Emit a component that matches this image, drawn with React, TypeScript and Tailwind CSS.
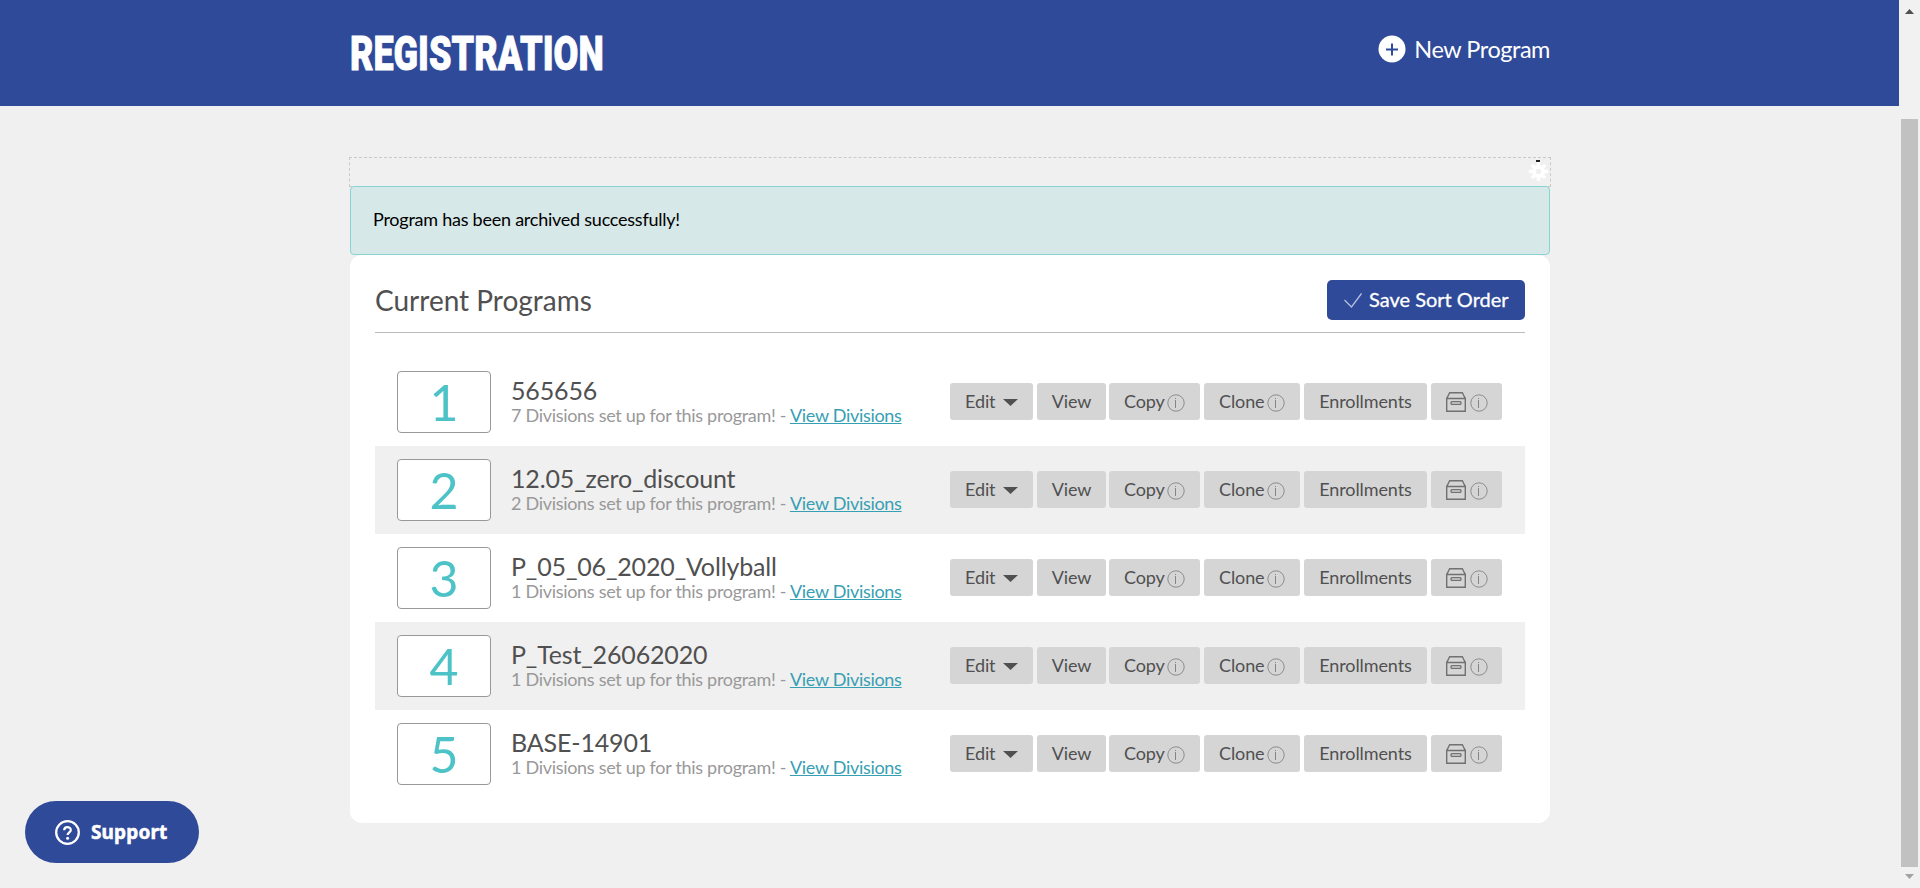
import type { ReactNode } from "react";

type Program = { name: string; divisions: number };

const programs: Program[] = [
  { name: "565656", divisions: 7 },
  { name: "12.05_zero_discount", divisions: 2 },
  { name: "P_05_06_2020_Vollyball", divisions: 1 },
  { name: "P_Test_26062020", divisions: 1 },
  { name: "BASE-14901", divisions: 1 },
];

function InfoIcon() {
  return (
    <svg className="mt-[3px] size-[18px] shrink-0" viewBox="0 0 18 18" fill="none" stroke="#858585">
      <circle cx="9" cy="9" r="8.2" strokeWidth="0.9" />
      <path d="M8.5 4v1M8.5 6v8" />
    </svg>
  );
}

function ArchiveIcon() {
  return (
    <svg className="mt-px size-5 shrink-0" viewBox="0 0 20 20" fill="none" stroke="#707070" strokeWidth="1.4">
      <path d="M.7 6.5h18.6v12.8H.7zM.7 6.5l3-5.8h12.6l3 5.8" />
      <rect x="5" y="9.6" width="10" height="2.8" rx="1.2" />
    </svg>
  );
}

function Action({ className, children }: { className: string; children: ReactNode }) {
  return (
    <button className={`flex h-[37px] shrink-0 items-center rounded-[3px] bg-[#d5d5d5] text-[18px] tracking-[-0.1px] text-[#505050] ${className}`}>
      {children}
    </button>
  );
}

function ProgramRow({ program, index }: { program: Program; index: number }) {
  return (
    <li className={`flex h-[88px] items-center pl-[22px] ${index % 2 ? "bg-[#f0f0f0]" : "bg-white"}`}>
      <div className="flex h-[62px] w-[94px] shrink-0 items-center justify-center rounded-[4px] border border-[#999] bg-white text-[50px] leading-none text-[#4dc3c8]">
        {index + 1}
      </div>
      <div className="ml-5 w-[439px] shrink-0 whitespace-nowrap pb-[2px]">
        <div className="text-[25px] leading-[28px] tracking-[-0.15px] text-[#505050]">{program.name}</div>
        <div className="text-[18px] leading-[22px] tracking-[-0.3px] text-[#999]">
          {program.divisions} Divisions set up for this program! -{" "}
          <a className="text-[#369fb2] underline">View Divisions</a>
        </div>
      </div>
      <div className="flex pb-px">
        <Action className="w-[83px] pl-[15px]">
          Edit
          <svg className="ml-2 mt-0.5 h-[7px] w-[15px]" viewBox="0 0 15 7">
            <path d="M0 0h15L7.5 7z" fill="#505050" />
          </svg>
        </Action>
        <Action className="ml-1 w-[69px] justify-center">View</Action>
        <Action className="ml-[3px] w-[91px] gap-[2.5px] pl-[15px]">
          Copy
          <InfoIcon />
        </Action>
        <Action className="ml-1 w-[96px] gap-[2.5px] pl-[15px]">
          Clone
          <InfoIcon />
        </Action>
        <Action className="ml-1 w-[123px] justify-center">Enrollments</Action>
        <Action className="ml-1 w-[71px] gap-1 pl-[15px]">
          <ArchiveIcon />
          <InfoIcon />
        </Action>
      </div>
    </li>
  );
}

function Scrollbar() {
  return (
    <div className="flex w-[21px] shrink-0 flex-col items-center bg-[#f1f1f1]">
      <svg className="mt-[9px] h-[5px] w-[9px]" viewBox="0 0 9 5">
        <path d="M0 5L4.5 0L9 5z" fill="#505050" />
      </svg>
      <div className="mt-[105px] h-[748px] w-[17px] bg-[#c1c1c1]" />
      <svg className="mt-[7px] h-[5px] w-[9px]" viewBox="0 0 9 5">
        <path d="M0 0h9L4.5 5z" fill="#a3a3a3" />
      </svg>
    </div>
  );
}

export default function App() {
  return (
    <div className="flex h-[888px] w-[1920px] overflow-hidden bg-[#f0f0f0] font-['Lato',sans-serif]">
      <div className="relative flex-1">
        <header className="h-[106px] bg-[#2f4a99] pl-[350px]">
          <div className="flex w-[1200px] items-start justify-between text-white">
            <h1 className="mt-[24px] origin-left scale-x-[0.734] whitespace-nowrap font-['Roboto',sans-serif] text-[49px] font-black leading-[60px] [-webkit-text-stroke:0.9px_#fff]">
              REGISTRATION
            </h1>
            <a className="mt-[34px] flex items-center gap-[8px] text-[23.5px] leading-[30px] tracking-[-0.45px]">
              <svg className="size-[28px]" viewBox="0 0 28 28">
                <circle cx="14" cy="14" r="13.5" fill="#fff" />
                <path d="M14 8.5v12M8 14.5h12" stroke="#2f4a99" strokeWidth="2" />
              </svg>
              <span>New Program</span>
            </a>
          </div>
        </header>

        <main className="ml-[349px] mt-[51px] w-[1202px]">
          <div className="relative h-[30px] border border-dashed border-[#c9c9c9]">
            <div className="absolute right-[10px] top-[2px] h-0.5 w-1 bg-[#222]" />
            <svg className="absolute right-[2px] top-[4px] size-[19px]" viewBox="0 0 20 20">
              <g stroke="#fff" strokeWidth="3.6">
                <path d="M10 0v5M10 15v5M0 10h5M15 10h5M3 3l3.5 3.5M13.5 13.5L17 17M17 3l-3.5 3.5M6.5 13.5L3 17" />
              </g>
              <circle cx="10" cy="10" r="4.8" fill="none" stroke="#fff" strokeWidth="4" />
            </svg>
          </div>
          <div className="relative mx-px -mt-px flex h-[69px] items-center rounded-[4px] border border-[#87d3d6] bg-[#d7e8e8] pb-[2px] pl-[22px] text-[18px] tracking-[-0.24px] text-black">
            Program has been archived successfully!
          </div>
          <section className="mx-px h-[568px] rounded-[12px] bg-white px-[25px] pt-[25px]">
            <div className="flex h-[53px] items-start justify-between border-b border-[#bbb]">
              <h2 className="text-[28px] leading-[40px] text-[#505050]">Current Programs</h2>
              <button className="flex h-10 w-[198px] items-center rounded-[5px] bg-[#2f4a99] pb-[2px] pl-[17px] text-[20px] text-white">
                <svg className="mr-[7px] mt-[3px] h-[15px] w-[18px]" viewBox="0 0 18 15" fill="none" stroke="#b4bfdc" strokeWidth="1.3">
                  <path d="M.5 7L7.5 14L17.5.5" />
                </svg>
                <span className="whitespace-nowrap [-webkit-text-stroke:0.3px_#fff]">Save Sort Order</span>
              </button>
            </div>
            <ul className="mt-[25px]">
              {programs.map((program, index) => (
                <ProgramRow key={program.name} program={program} index={index} />
              ))}
            </ul>
          </section>
        </main>

        <button className="absolute left-[25px] top-[801px] flex h-[62px] w-[174px] items-center rounded-full bg-[#2f4a99] pl-[30px] font-['Noto_Sans',sans-serif] text-[19px] font-bold text-white">
          <svg className="mr-[11px] size-[25px]" viewBox="0 0 25 25" fill="none" stroke="#fff">
            <circle cx="12.5" cy="12.5" r="11.3" strokeWidth="2.3" />
            <path d="M9.2 10.2c0-4 6.6-4 6.6-.2 0 2.4-3.2 2.4-3.2 5" strokeWidth="2.2" />
            <circle cx="12.6" cy="18.2" r="1.5" fill="#fff" stroke="none" />
          </svg>
          <span className="tracking-[0.15px] [-webkit-text-stroke:0.5px_#fff]">Support</span>
        </button>
      </div>
      <Scrollbar />
    </div>
  );
}
